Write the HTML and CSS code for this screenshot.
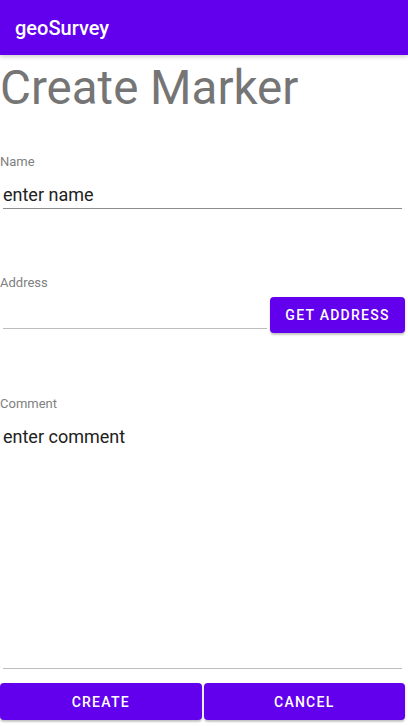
FILE: index.html
```html
<!DOCTYPE html>
<html>
<head>
<meta charset="utf-8">
<link rel="stylesheet" href="styles.css">
</head>
<body>
<div class="screen">
  <header class="appbar">geoSurvey</header>
  <main class="form">
    <h1 class="title">Create Marker</h1>
    <div class="label label-name">Name</div>
    <div class="input input-name">enter name</div>
    <div class="label label-address">Address</div>
    <div class="address-row">
      <div class="input input-address"></div>
      <button class="btn btn-address">GET ADDRESS</button>
    </div>
    <div class="label label-comment">Comment</div>
    <div class="input input-comment">enter comment</div>
  </main>
  <footer class="actions">
    <button class="btn btn-action">CREATE</button>
    <button class="btn btn-action">CANCEL</button>
  </footer>
</div>
</body>
</html>
```

FILE: styles.css
```css
html, body {
  margin: 0;
  padding: 0;
  background: #ffffff;
}
body {
  font-family: Roboto, "Noto Sans", sans-serif;
}
.screen {
  width: 408px;
  height: 726px;
  display: flex;
  flex-direction: column;
  overflow: hidden;
}
.appbar {
  height: 55px;
  flex: none;
  background: #6200ee;
  color: #ffffff;
  font-size: 20px;
  font-weight: 500;
  display: flex;
  align-items: center;
  padding-left: 15px;
  box-shadow: 0 2px 4px rgba(0, 0, 0, 0.18);
  position: relative;
  z-index: 1;
}
.form {
  flex: 1;
  display: flex;
  flex-direction: column;
  min-height: 0;
}
.title {
  margin: 5px 0 0 0;
  font-size: 47.5px;
  line-height: 56px;
  font-weight: 400;
  color: #757575;
}
.label {
  font-size: 13px;
  line-height: 14px;
  color: #808080;
}
.label-name { margin-top: 39px; }
.label-address { margin-top: 67px; }
.label-comment { margin-top: 64px; }
.input {
  font-size: 18px;
  line-height: 21px;
  color: #212121;
  margin: 15px 6px 0 3px;
  padding-bottom: 3px;
  border-bottom: 1px solid #8c8c8c;
}
.address-row {
  display: flex;
  align-items: flex-start;
  margin-top: 7px;
}
.input-address {
  flex: 1;
  margin: 0 0 0 3px;
  height: 31px;
  padding: 0;
  border-bottom-color: #bdbdbd;
}
.btn {
  background: #6200ee;
  color: #ffffff;
  border: none;
  border-radius: 4px;
  font-family: Roboto, "Noto Sans", sans-serif;
  font-size: 14px;
  font-weight: 500;
  letter-spacing: 1.25px;
  box-shadow: 0 2px 2px rgba(0, 0, 0, 0.22), 0 0 1px rgba(0, 0, 0, 0.12);
  padding: 0;
  margin: 0;
}
.btn-address {
  width: 135px;
  height: 36px;
  margin: 0 3px 0 3px;
}
.input-comment {
  flex: 1;
  border-bottom-color: #bdbdbd;
}
.actions {
  flex: none;
  display: flex;
  gap: 2px;
  margin: 14px 3px 6px 0;
}
.btn-action {
  flex: 1;
  height: 37px;
}
```
